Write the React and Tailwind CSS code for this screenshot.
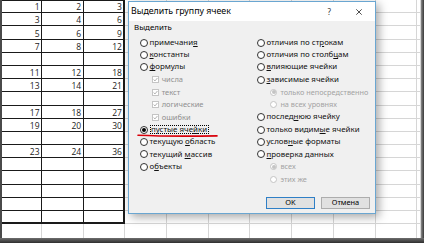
import React from 'react';

const data = [
  ['1', '2', '3'],
  ['3', '4', '6'],
  ['5', '6', '9'],
  ['7', '8', '12'],
  [],
  ['11', '12', '18'],
  ['13', '14', '21'],
  [],
  ['17', '18', '27'],
  ['19', '20', '30'],
  [],
  ['23', '24', '36'],
  [], [], [], [], [],
];

const COLS = 11;

const leftItems = [
  { t: 'примечани&я' },
  { t: '&константы' },
  { t: '&формулы' },
  { t: 'числа', cb: true },
  { t: 'текст', cb: true },
  { t: 'логические', cb: true },
  { t: 'ошибки', cb: true },
  { t: 'пустые яче&йки', checked: true, focus: true },
  { t: 'текущую &область' },
  { t: 'текущий &массив' },
  { t: 'о&бъекты' },
];

const rightItems = [
  { t: 'отличия по ст&рокам' },
  { t: 'отличия по столб&цам' },
  { t: '&влияющие ячейки' },
  { t: '&зависимые ячейки' },
  { t: 'только непосредственно', sub: true, checked: true },
  { t: 'на всех уровнях', sub: true },
  { t: 'послед&нюю ячейку' },
  { t: 'только видим&ые ячейки' },
  { t: 'услов&ные форматы' },
  { t: '&проверка данных' },
  { t: 'всех', sub: true, checked: true },
  { t: 'этих же', sub: true },
];

// "&" marks the accelerator letter, as in the Windows dialog
const Label = ({ text }) => {
  const i = text.indexOf('&');
  if (i < 0) return <>{text}</>;
  return (
    <>
      {text.slice(0, i)}
      <span className="underline underline-offset-[1px] decoration-[0.8px]">{text[i + 1]}</span>
      {text.slice(i + 2)}
    </>
  );
};

const Radio = ({ checked, disabled, small }) => (
  <span
    className={`${small ? 'w-[7px] h-[7px]' : 'w-[8px] h-[8px]'} shrink-0 rounded-full border bg-white flex items-center justify-center ${disabled ? 'border-[#c4c4c4]' : 'border-[#333]'}`}
  >
    {checked && (
      <span className={`w-[4px] h-[4px] rounded-full ${disabled ? 'bg-[#c4c4c4]' : 'bg-black'}`} />
    )}
  </span>
);

const Check = () => (
  <span className="w-[7px] h-[7px] shrink-0 border border-[#c4c4c4] bg-white flex items-center justify-center">
    <svg width="5" height="5" viewBox="0 0 5 5">
      <path d="M0.6 2.6 L2 3.9 L4.4 1" fill="none" stroke="#a8a8a8" strokeWidth="0.9" />
    </svg>
  </span>
);

const Item = ({ item }) => {
  if (item.cb) {
    return (
      <div className="h-[12.45px] flex items-center gap-[3px] ml-[11.7px] text-[7.5px] text-[#8f8f8f] whitespace-nowrap">
        <Check />
        <span><Label text={item.t} /></span>
      </div>
    );
  }
  if (item.sub) {
    return (
      <div className="h-[12.45px] flex items-center gap-[3px] ml-[13.4px] text-[7.3px] text-[#a3a3a3] whitespace-nowrap">
        <Radio checked={item.checked} disabled small />
        <span><Label text={item.t} /></span>
      </div>
    );
  }
  return (
    <div className="h-[12.45px] flex items-center gap-[1.5px] text-[#111] whitespace-nowrap">
      <Radio checked={item.checked} />
      <span className={item.focus ? 'border border-dotted border-black leading-[7px] px-[0.5px]' : ''}>
        <Label text={item.t} />
      </span>
    </div>
  );
};

const cellClass = (r, c, last) => {
  const inTable = c <= 2 && !last;
  let cls = '';
  if (inTable) {
    cls += c === 2 ? ' border-r-2 border-r-[#1a1a1a]' : ' border-r border-r-[#1a1a1a]';
    cls += r === data.length - 1 ? ' border-b-2 border-b-[#1a1a1a]' : ' border-b border-b-[#1a1a1a]';
    if (r === 0) cls += ' border-t border-t-[#1a1a1a]';
  } else {
    cls += ' border-r border-r-[#d6d6d6]';
    if (!last) cls += ' border-b border-b-[#d6d6d6]';
  }
  return cls;
};

const Sheet = () => (
  <div className="flex-1 flex flex-col bg-white">
    {data.map((row, r) => (
      <div key={r} className="h-[13.2px] flex shrink-0">
        {Array.from({ length: COLS }).map((_, c) => (
          <div
            key={c}
            className={`${c === 0 ? 'w-[40px]' : c === COLS - 1 ? 'flex-1' : 'w-[41.7px]'} shrink-0 flex items-end justify-end pr-[1.5px] pb-[0.5px] text-[8.5px] leading-none text-[#222] font-['Open_Sans',sans-serif] ${cellClass(r, c, false)}`}
          >
            {row[c] || ''}
          </div>
        ))}
      </div>
    ))}
    <div className="flex-1 flex">
      {Array.from({ length: COLS }).map((_, c) => (
        <div
          key={c}
          className={`${c === 0 ? 'w-[40px]' : c === COLS - 1 ? 'flex-1' : 'w-[41.7px]'} shrink-0 ${cellClass(0, c, true)}`}
        />
      ))}
    </div>
  </div>
);

const Dialog = () => (
  <div className="absolute left-[128px] top-[1px] w-[248px] h-[213px] border border-[#6aa6d1] bg-[#f0f0f0] flex flex-col shadow-[3px_3px_9px_rgba(0,0,0,0.35)] font-['Noto_Sans',sans-serif] text-[7.9px]">
    <div className="h-[19px] bg-white flex items-center justify-between pl-[2px] pr-[13px] text-black">
      <span className="text-[8.8px]">Выделить группу ячеек</span>
      <div className="flex items-center gap-[25px]">
        <span className="text-[8px] text-[#333]">?</span>
        <svg width="6" height="6" viewBox="0 0 6 6">
          <path d="M0.3 0.3 L5.7 5.7 M5.7 0.3 L0.3 5.7" stroke="#222" strokeWidth="0.8" />
        </svg>
      </div>
    </div>
    <div className="flex-1 flex flex-col pt-[1px]">
      <div className="h-[12px] flex items-center pl-[5px] text-black">Выделить</div>
      <div className="flex mt-[2.3px] pl-[11px]">
        <div className="w-[117px] flex flex-col">
          {leftItems.map((it, i) => <Item key={i} item={it} />)}
        </div>
        <div className="flex-1 flex flex-col">
          {rightItems.map((it, i) => <Item key={i} item={it} />)}
        </div>
      </div>
      <div className="flex justify-end gap-[6px] pr-[5px] mt-[11px]">
        <button className="w-[49px] h-[12px] bg-[#e1e1e1] border border-[#2f7fc6] flex items-center justify-center text-[7.4px] text-black">
          OK
        </button>
        <button className="w-[49px] h-[12px] bg-[#e1e1e1] border border-[#adadad] flex items-center justify-center text-[7.4px] text-black">
          Отмена
        </button>
      </div>
    </div>
  </div>
);

export default function App() {
  return (
    <div className="relative w-[424px] h-[243px] overflow-hidden bg-white flex flex-col">
      <div className="flex-1 flex">
        <div className="w-[2px] bg-[#4a4a4a]" />
        <Sheet />
        <div className="w-[3px] bg-gradient-to-r from-[#8a8a8a] to-[#3a3a3a]" />
      </div>
      <div className="h-[5px] bg-gradient-to-b from-[#6e6e6e] to-[#2f2f2f]" />
      <Dialog />
      <svg className="absolute left-[137px] top-[133px]" width="82" height="6" viewBox="0 0 82 6">
        <path d="M1 2.3 Q 30 3.6 80 2.9" fill="none" stroke="#d9000a" strokeWidth="1.6" strokeLinecap="round" />
      </svg>
    </div>
  );
}
